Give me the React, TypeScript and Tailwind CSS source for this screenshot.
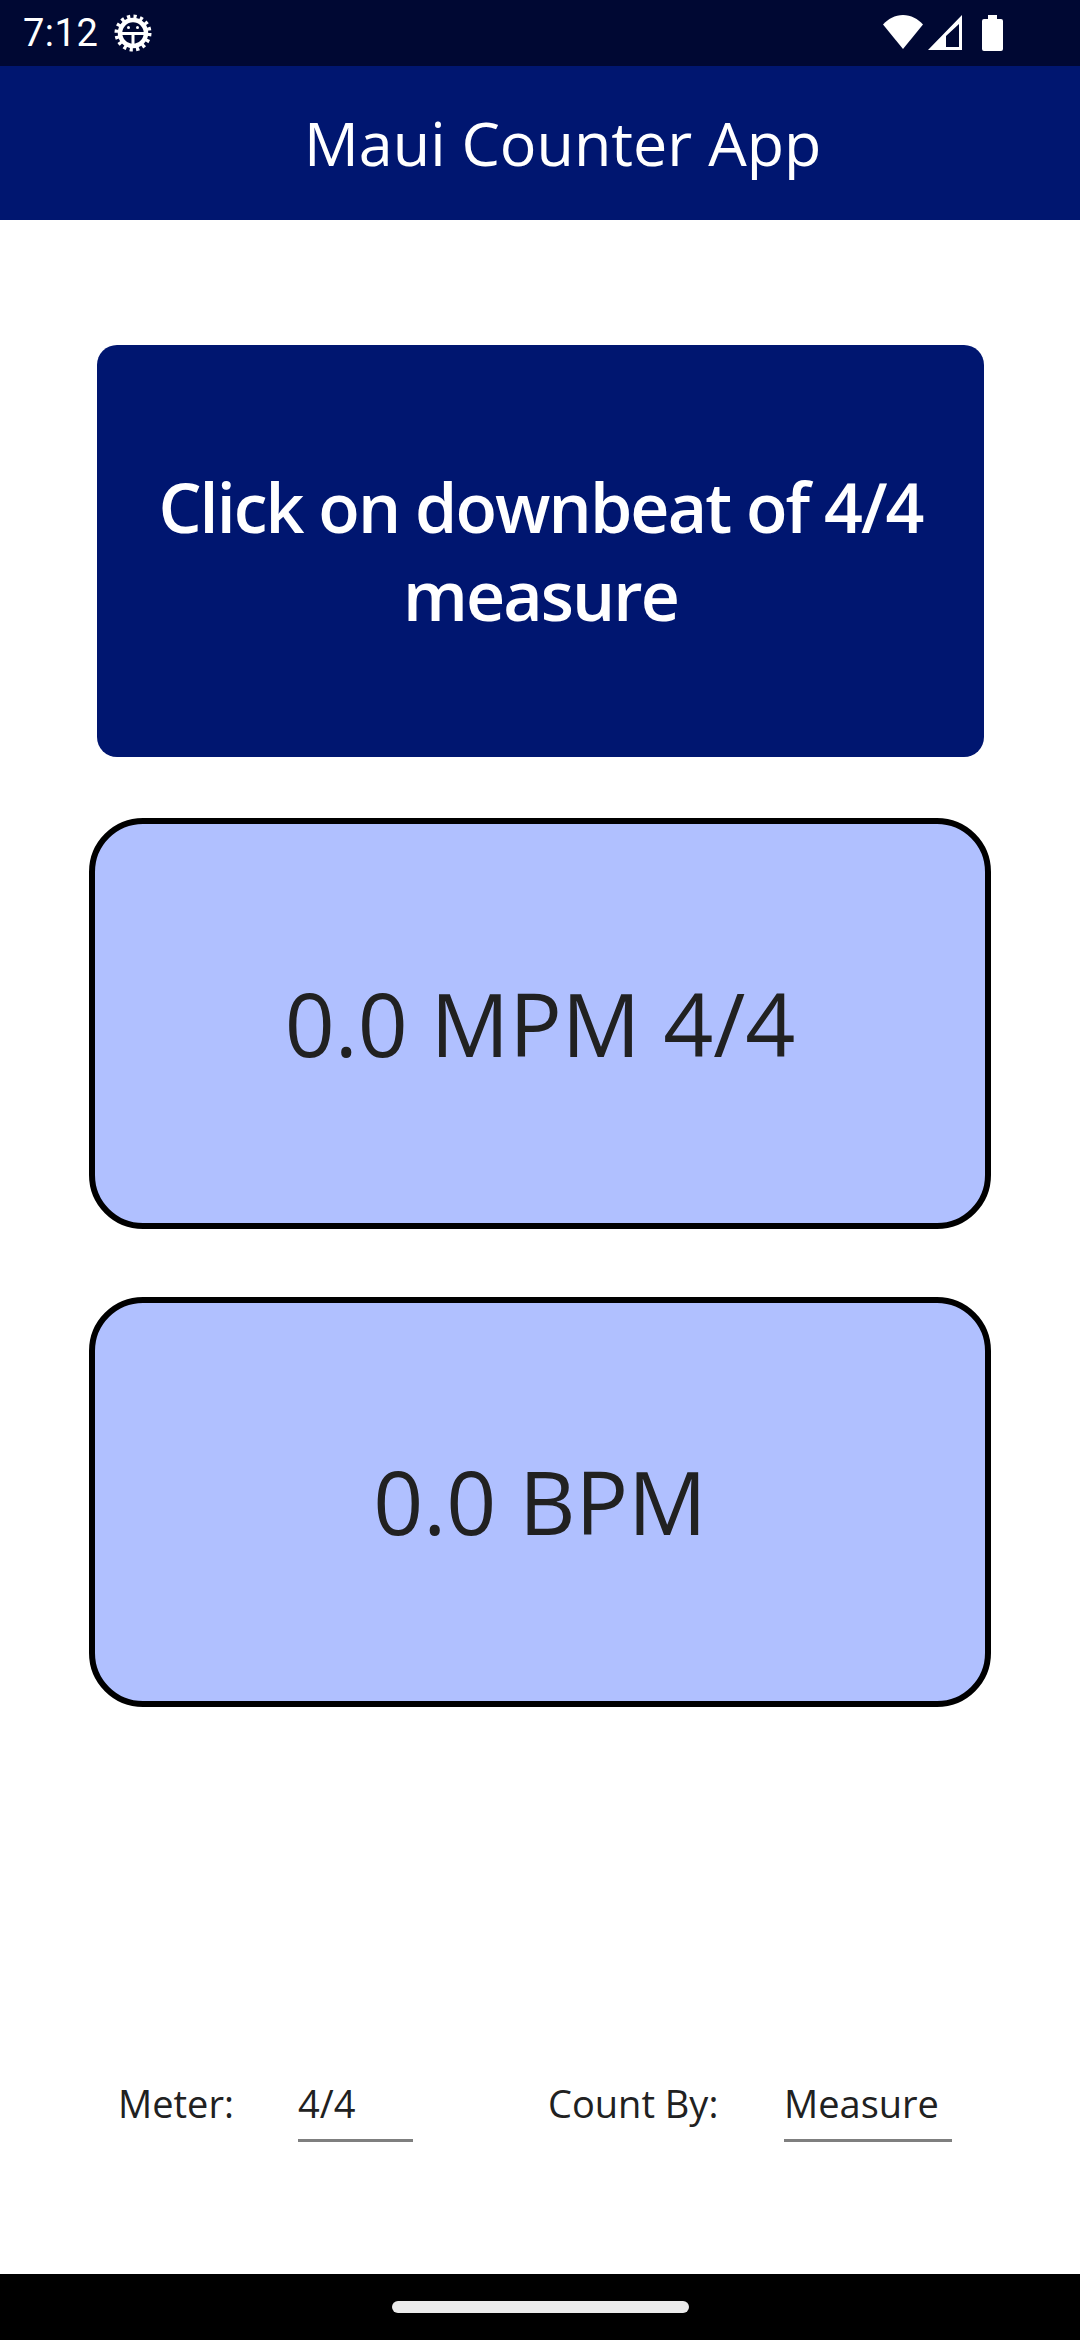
const openSans = 'font-["Open_Sans",sans-serif]';

const GearBug = () => (
    <svg viewBox="0 0 38 38" className="w-[38px] h-[38px] ml-[16px]">
        <circle cx="19" cy="19" r="13" fill="none" stroke="#fff" strokeWidth="4.500" />
        <circle cx="19" cy="19" r="16.5" fill="none" stroke="#fff" strokeWidth="4" strokeDasharray="3.2 3.28" />
        <path d="M7 19.500h24M19 19.500v12" stroke="#fff" strokeWidth="3" fill="none" />
        <circle cx="14.500" cy="13.500" r="1.500" fill="#fff" />
        <circle cx="23.500" cy="13.500" r="1.500" fill="#fff" />
    </svg>
);

const StatusBar = () => (
    <div className="h-[66px] shrink-0 bg-[#000833] flex items-center pl-[23px] text-white">
        <span className="font-['Roboto',sans-serif] text-[38px] leading-none tracking-[0.5px]">7:12</span>
        <GearBug />
        <div className="ml-auto flex items-center pr-[77px]">
            <svg viewBox="0 0 40 36" className="w-[40px] h-[36px]">
                <path d="M0 9.500C5 4 12 0 20 0s15 4 20 9.500L20 34z" fill="#fff" />
            </svg>
            <svg viewBox="0 0 34 36" className="w-[34px] h-[36px] ml-[5px]">
                <path fillRule="evenodd" d="M34 0v35H0zM18 21v11h13V9z" fill="#fff" />
            </svg>
            <svg viewBox="0 0 21 36" className="w-[21px] h-[36px] ml-[20px]">
                <path d="M6 0h9v4h4a2 2 0 0 1 2 2v28a2 2 0 0 1-2 2H2a2 2 0 0 1-2-2V6a2 2 0 0 1 2-2h4z" fill="#fff" />
            </svg>
        </div>
    </div>
);

const ReadoutCard = ({ text, className = '' }: { text: string; className?: string }) => (
    <div className={`mx-[89px] border-[6px] border-black rounded-[54px] bg-[#b0c0ff] flex items-center justify-center text-[87.5px] text-[#212121] ${className}`}>
        {text}
    </div>
);

const Picker = ({ value, width }: { value: string; width: string }) => (
    <div className={`${width} h-[71px] border-b-[3px] border-[#7f7f7f] text-[38px] leading-[50px] pt-[7px] text-[#212121]`}>
        {value}
    </div>
);

export default function App() {
    return (
        <div className={`w-[1080px] h-[2340px] bg-white flex flex-col overflow-hidden ${openSans}`}>
            <StatusBar />

            {/* App bar */}
            <div className="h-[154px] shrink-0 bg-[#001670] flex items-center pl-[304px] text-white text-[61px]">
                Maui Counter App
            </div>

            <div className="flex-1 flex flex-col">
                <button className="h-[412px] ml-[97px] mr-[96px] mt-[125px] rounded-[20px] bg-[#001670] text-white text-[68px] leading-[88px] font-semibold tracking-[-1.9px] px-[40px]">
                    Click on downbeat of 4/4 measure
                </button>
                <ReadoutCard text="0.0 MPM 4/4" className="mt-[61px] h-[411px]" />
                <ReadoutCard text="0.0 BPM" className="mt-[68px] h-[410px]" />

                {/* Meter / count by row */}
                <div className="mt-[364px] flex items-start text-[38px] text-[#212121] leading-[50px] pl-[118px]">
                    <span className="w-[180px] pt-[7px]">Meter:</span>
                    <Picker value="4/4" width="w-[115px]" />
                    <span className="ml-[135px] w-[236px] pt-[7px]">Count By:</span>
                    <Picker value="Measure" width="w-[168px]" />
                </div>
            </div>

            {/* Gesture bar */}
            <div className="h-[66px] shrink-0 bg-black flex items-center justify-center">
                <div className="w-[297px] h-[12px] rounded-full bg-[#ebebeb]" />
            </div>
        </div>
    );
}
